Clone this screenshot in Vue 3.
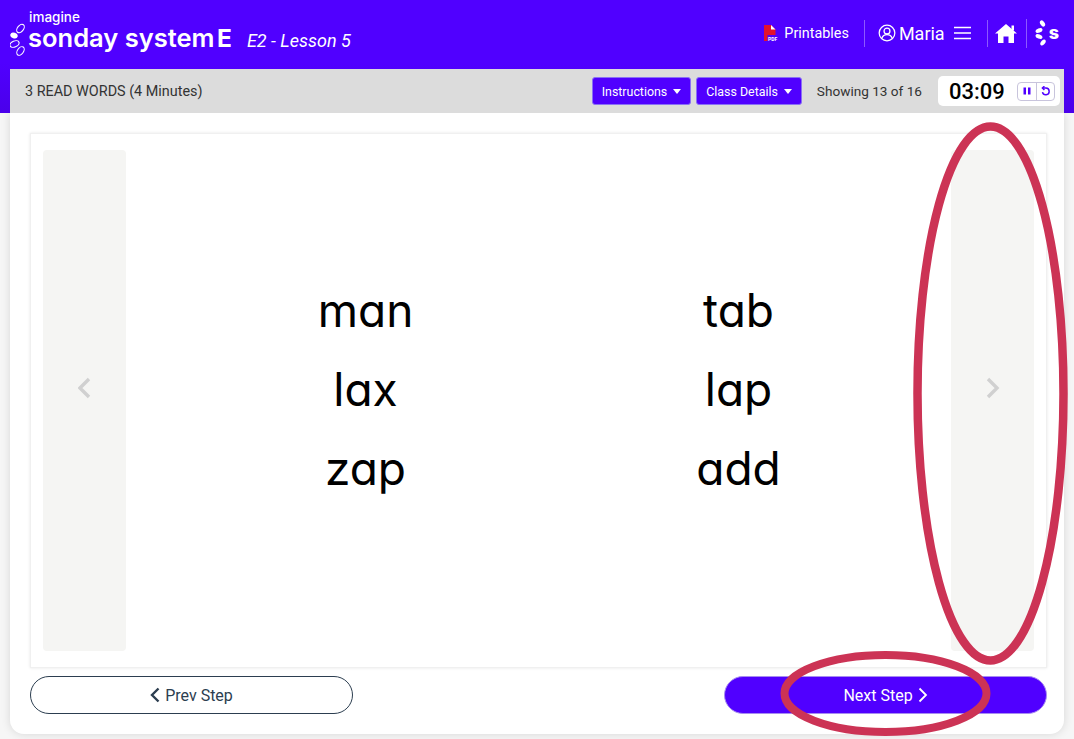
<script setup>
const columns = [
  ['man', 'lax', 'zap'],
  ['tab', 'lap', 'add'],
]
</script>

<template>
  <div class="page">
    <div class="top">
      <header class="header">
        <div class="brand">
          <svg class="brand-mark" viewBox="0 0 18 34" width="18" height="34">
            <g fill="none" stroke="#fff" stroke-width="1.100">
              <ellipse cx="10.500" cy="5.500" rx="3" ry="4.800" transform="rotate(38 10.500 5.500)" />
              <ellipse cx="4.500" cy="21" rx="3" ry="4.800" transform="rotate(68 4.500 21)" />
              <ellipse cx="10.500" cy="28" rx="3" ry="4.800" transform="rotate(35 10.500 28)" />
            </g>
            <ellipse cx="4" cy="12.500" rx="3.800" ry="2.800" fill="#fff" transform="rotate(20 4 12.500)" />
          </svg>
          <div class="brand-text">
            <span class="brand-small">imagine</span>
            <span class="brand-big">sonday system<span class="brand-e">E</span></span>
          </div>
          <span class="lesson">E2 - Lesson 5</span>
        </div>
        <div class="head-right">
          <svg class="pdf" viewBox="0 0 17 17" width="17" height="17">
            <path d="M1 0h7l4.500 4.500V16H1z" fill="#e3122d" />
            <path d="M8 0l4.500 4.500H8z" fill="#fff" />
            <rect x="4.500" y="10" width="12" height="6.500" fill="#5000ff" />
            <text x="5" y="15.800" class="pdf-text">PDF</text>
          </svg>
          <span class="printables">Printables</span>
          <i class="divider div-a"></i>
          <svg class="user" viewBox="0 0 20 20" width="18" height="18" fill="none" stroke="#fff" stroke-width="1.400">
            <circle cx="10" cy="10" r="8.700" />
            <circle cx="10" cy="7.800" r="3.300" />
            <path d="M4.200 16c1-3 3.200-4.200 5.800-4.200s4.800 1.200 5.800 4.200" />
          </svg>
          <span class="maria">Maria</span>
          <svg class="burger" viewBox="0 0 17 14" width="17" height="14" stroke="#fff" stroke-width="1.500">
            <path d="M0 1.500h17M0 7h17M0 12.500h17" />
          </svg>
          <i class="divider div-b"></i>
          <svg class="home" viewBox="0 0 22 19" width="22" height="19">
            <path d="M11 0 L22 9.500 L19 9.500 L19 19 L13.500 19 L13.500 12.500 L8.500 12.500 L8.500 19 L3 19 L3 9.500 L0 9.500 Z" fill="#fff" />
            <rect x="16.500" y="1.500" width="2.500" height="5" fill="#fff" />
          </svg>
          <i class="divider div-c"></i>
          <svg class="s-mark" viewBox="0 0 14 26" width="14" height="26" fill="#fff">
            <ellipse cx="7.500" cy="3.500" rx="2.100" ry="3.400" transform="rotate(-35 7.500 3.500)" />
            <ellipse cx="4" cy="10.500" rx="3.600" ry="2.100" transform="rotate(-20 4 10.500)" />
            <ellipse cx="4" cy="16.500" rx="3.600" ry="2.100" transform="rotate(20 4 16.500)" />
            <ellipse cx="8" cy="22.500" rx="2.100" ry="3.400" transform="rotate(38 8 22.500)" />
          </svg>
          <span class="s-letter">s</span>
        </div>
      </header>
      <div class="toolbar">
        <span class="step-title">3 READ WORDS (4 Minutes)</span>
        <div class="tools">
          <button class="drop">Instructions<i class="caret"></i></button>
          <button class="drop">Class Details<i class="caret"></i></button>
          <span class="showing">Showing 13 of 16</span>
          <div class="timer">
            <span class="time">03:09</span>
            <div class="timer-btns">
              <span class="tb">
                <svg viewBox="0 0 8 8" width="8" height="8" fill="#5000ff"><rect x="0.500" y="0.500" width="2.500" height="7" /><rect x="5" y="0.500" width="2.500" height="7" /></svg>
              </span>
              <span class="tb tb-r">
                <svg viewBox="0 0 12 12" width="11" height="11" fill="none" stroke="#5000ff" stroke-width="1.600">
                  <path d="M3 2.200h3.500a3.700 3.700 0 1 1-3.800 4.500" />
                  <path d="M4.800 0.200 2.600 2.200 4.800 4.400" />
                </svg>
              </span>
            </div>
          </div>
        </div>
      </div>
    </div>

    <main class="panel">
      <section class="card">
        <div class="side">
          <svg viewBox="0 0 14 22" width="14" height="22" fill="none" stroke="#d0d0d0" stroke-width="3.400"><path d="M11 2 2 11l9 9" /></svg>
        </div>
        <div class="words">
          <div v-for="(col, i) in columns" :key="i" class="word-col">
            <div v-for="w in col" :key="w" class="word">{{ w }}</div>
          </div>
        </div>
        <div class="side">
          <svg viewBox="0 0 14 22" width="14" height="22" fill="none" stroke="#d0d0d0" stroke-width="3.400"><path d="M2 2l9 9-9 9" /></svg>
        </div>
      </section>
      <div class="steps">
        <button class="step prev">
          <svg viewBox="0 0 10 16" width="10" height="16" fill="none" stroke="#2c3e50" stroke-width="2.400"><path d="M8.500 1.500 2 8l6.500 6.500" /></svg>
          Prev Step
        </button>
        <button class="step next">
          Next Step
          <svg viewBox="0 0 10 16" width="10" height="16" fill="none" stroke="#fff" stroke-width="1.800"><path d="M1.500 1.500 8 8l-6.500 6.500" /></svg>
        </button>
      </div>
    </main>

    <svg class="marks" viewBox="0 0 1074 739" width="1074" height="739" fill="none" stroke="#cc3355">
      <ellipse cx="990.500" cy="393.500" rx="73" ry="267" stroke-width="8.500" />
      <ellipse cx="885.500" cy="693.500" rx="101" ry="38.500" stroke-width="8" />
    </svg>
  </div>
</template>

<style>
html, body { margin: 0; padding: 0; overflow: hidden; }
</style>

<style scoped>
.page {
  position: relative;
  width: 1074px;
  height: 739px;
  overflow: hidden;
  background: #f6f6f6;
  font-family: Roboto, "Liberation Sans", sans-serif;
}
.top {
  position: relative;
  z-index: 1;
  background: linear-gradient(#5000ff 55%, #4a00ea);
  padding: 0 10px;
}
.header {
  height: 69px;
  display: flex;
  justify-content: space-between;
  align-items: center;
  color: #fff;
}
.brand { display: flex; align-items: flex-start; height: 69px; }
.brand-mark { margin-top: 23px; flex: none; }
.brand-text { display: flex; flex-direction: column; margin-top: 10px; }
.brand-small { font: 500 13.500px/15px Inter, sans-serif; margin-left: 1px; }
.brand-big {
  font: 600 25.500px/26px Inter, sans-serif;
  white-space: nowrap;
}
.brand-e { font-size: 24.500px; font-weight: 700; margin-left: 2.500px; }
.lesson { font: italic 400 18px/21px Roboto, sans-serif; margin: 30px 0 0 15px; white-space: nowrap; }
.head-right { display: flex; align-items: center; height: 66px; padding-bottom: 3px; }
.pdf { margin-right: 4px; }
.pdf-text { font: 700 5px Roboto, sans-serif; fill: #fff; }
.printables { font-size: 14.400px; }
.divider { display: block; width: 1px; background: rgba(255, 255, 255, 0.35); height: 27px; }
.div-a { margin: 0 13px 0 15px; }
.user { margin-right: 3px; }
.maria { font-size: 18px; margin-right: 9px; }
.burger { margin-right: 16px; }
.div-b { margin-right: 7px; }
.home { margin-right: 9px; }
.div-c { margin-right: 8px; height: 29px; }
.s-letter { font: 800 18px/1 Inter, sans-serif; margin: 0 5px 0 0; }
.toolbar {
  height: 44px;
  background: #dcdcdc;
  display: flex;
  align-items: center;
  justify-content: space-between;
  padding: 0 4px 0 15px;
  color: #333;
  font-size: 14.400px;
}
.tools { display: flex; align-items: center; }
.drop {
  height: 28px;
  padding: 0 9px;
  margin-right: 5px;
  border: 1px solid #8a70f5;
  border-radius: 3px;
  background: #5000ff;
  color: #fff;
  font: 400 12.400px Roboto, sans-serif;
  display: flex;
  align-items: center;
}
.caret {
  display: block;
  margin-left: 6px;
  width: 0;
  height: 0;
  border: 4px solid transparent;
  border-bottom: 0;
  border-top: 5px solid #fff;
}
.showing { margin: 0 16px 0 10px; font-size: 13.600px; }
.timer {
  width: 122px;
  height: 30px;
  background: #fff;
  border-radius: 5px;
  display: flex;
  align-items: center;
  box-sizing: border-box;
  padding-left: 11px;
}
.time { font-size: 22px; font-weight: 500; color: #000; width: 68px; }
.timer-btns {
  display: flex;
  width: 38px;
  height: 19px;
  border: 1px solid #c8c4dc;
  border-radius: 4px;
  box-sizing: border-box;
}
.tb { flex: 1; display: flex; align-items: center; justify-content: center; }
.tb-r { border-left: 1px solid #c8c4dc; }
.panel {
  margin: 0 10px;
  height: 621px;
  box-sizing: border-box;
  background: #fff;
  border-radius: 0 0 14px 14px;
  box-shadow: 0 0 10px rgba(0, 0, 0, 0.13);
  padding: 20px 17px 0 20px;
}
.card {
  height: 535px;
  box-sizing: border-box;
  border: 1px solid #f0f0f0;
  box-shadow: 0 0 3px rgba(0, 0, 0, 0.1);
  padding: 16px 12px;
  display: flex;
}
.side {
  width: 83px;
  flex: none;
  background: #f5f5f3;
  border-radius: 4px;
  display: flex;
  align-items: center;
  justify-content: center;
  padding-bottom: 26px;
  box-sizing: border-box;
}
.words {
  flex: 1;
  display: grid;
  grid-template-columns: 373px 373px;
  padding: 121px 0 0 53px;
  font-family: Inter, sans-serif;
  font-feature-settings: "cv11" 1;
  color: #000;
}
.word { font-size: 46px; line-height: 79px; text-align: center; }
.steps {
  display: flex;
  justify-content: space-between;
  margin-top: 8px;
}
.step {
  width: 323px;
  height: 38px;
  border-radius: 19px;
  font: 400 16px Roboto, sans-serif;
  display: flex;
  align-items: center;
  justify-content: center;
  gap: 5px;
  box-sizing: border-box;
}
.prev { background: #fff; border: 1px solid #2c3e50; color: #2c3e50; }
.next { background: #5000ff; border: 1px solid #a78cf0; color: #fff; }
.marks { position: absolute; inset: 0; pointer-events: none; z-index: 2; }
</style>
